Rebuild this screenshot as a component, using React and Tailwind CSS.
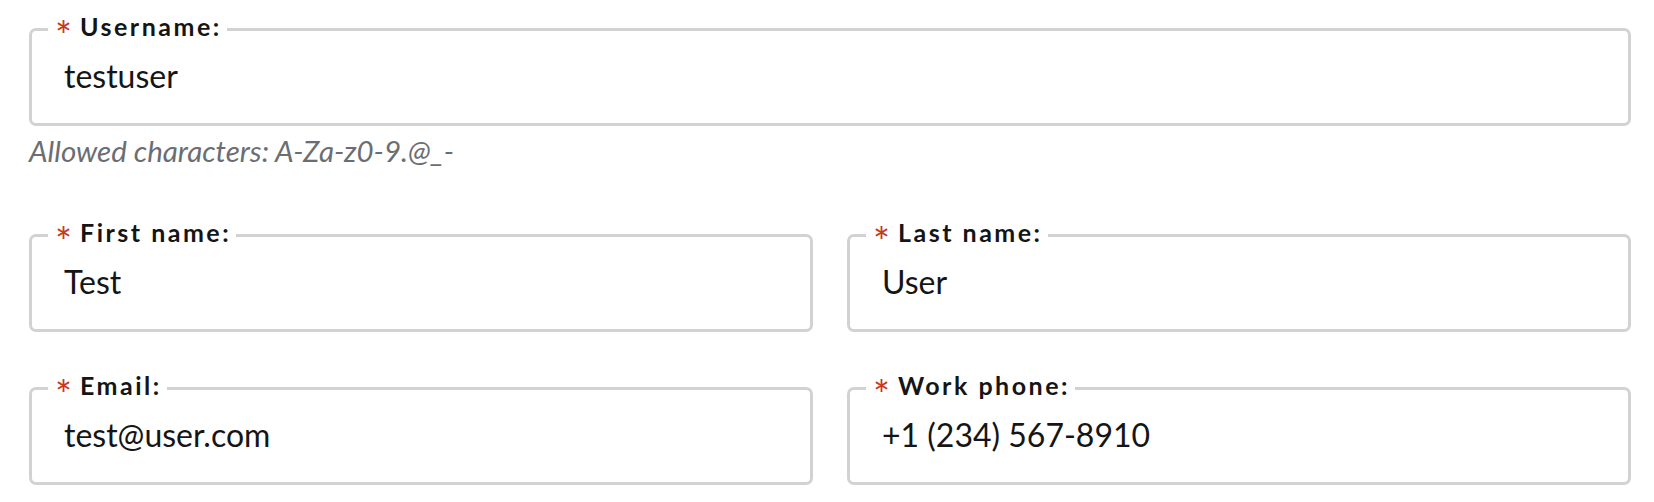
import React from "react";

const Field = ({ label, value }) => {
  return (
    <fieldset className="h-[112px] border-[3px] border-[#d2d2d2] rounded-[7px] px-0 min-w-0">
      <legend className="ml-[16px] h-[31px] pl-[7px] pr-[5px] text-[25px] leading-[24px] font-bold tracking-[0.1em] text-[#151515]">
        <span className="mr-[8px] inline-block h-[24px] align-top text-[40px] leading-[44px] font-normal tracking-normal text-[#c8381c]">*</span>
        {label}
      </legend>
      <div className="mt-[15px] pl-[32px] text-[32px] leading-[32px] text-[#151515]">{value}</div>
    </fieldset>
  );
};

export default function App() {
  return (
    <div className="bg-white min-h-[502px] pl-[29px] pr-[23px] pt-[14px] font-['Lato',sans-serif]">
      <Field label="Username:" value="testuser" />
      <p className="mt-[10px] text-[29.5px] leading-[30px] italic text-[#6a6e73]">
        Allowed characters: A-Za-z0-9.@_-
      </p>
      <div className="mt-[54px] grid grid-cols-2 gap-x-[34px] gap-y-[41px]">
        <Field label="First name:" value="Test" />
        <Field label="Last name:" value="User" />
        <Field label="Email:" value="test@user.com" />
        <Field label="Work phone:" value="+1 (234) 567-8910" />
      </div>
    </div>
  );
}
